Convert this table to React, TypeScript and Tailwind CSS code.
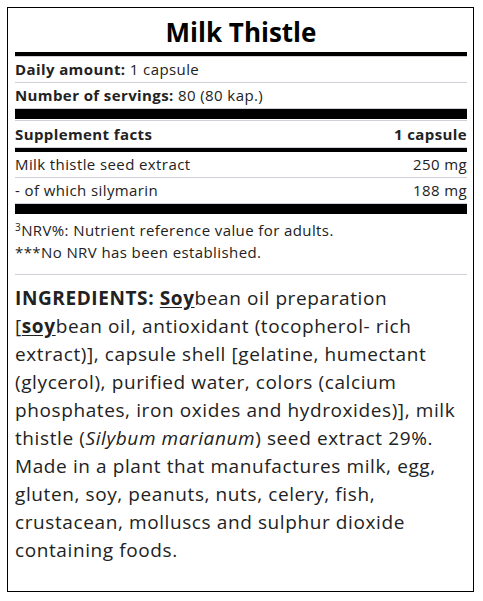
import React from "react";

const font = { fontFamily: '"Open Sans", "Liberation Sans", sans-serif' };

function Row({ left, right }: { left: React.ReactNode; right?: React.ReactNode }) {
  return (
    <div className="flex items-center justify-between h-[25px] text-[15px] leading-[25px] tracking-[0.4px] text-[#222]">
      <span>{left}</span>
      {right !== undefined && <span>{right}</span>}
    </div>
  );
}

export default function App() {
  return (
    <div className="bg-white min-h-[601px] pt-[7px] pl-[7px]" style={font}>
      <div className="w-[467px] h-[585px] border border-black pl-[7px] pr-[6px] text-[#222]">
        <div className="pt-[10px] pb-[6px] leading-[28px] text-center text-[26px] font-bold text-black">Milk Thistle</div>
        <div className="h-[4px] bg-black" />
        <div className="border-t border-[#cfcfdc]">
          <Row left={<><b>Daily amount:</b> <span className="font-normal">1 capsule</span></>} />
        </div>
        <div className="border-t border-b border-[#cfcfdc]">
          <Row left={<><b>Number of servings:</b> <span className="font-normal">80 (80 kap.)</span></>} />
        </div>
        <div className="h-[10px] bg-black" />
        <div className="mt-[1px] border-t border-b border-[#cfcfdc]">
          <div className="flex items-center justify-between h-[26px] text-[15px] tracking-[0.4px] font-bold text-[#222]">
            <span>Supplement facts</span>
            <span>1 capsule</span>
          </div>
        </div>
        <div className="h-[4px] bg-black" />
        <div className="border-b border-[#cfcfdc]">
          <Row left="Milk thistle seed extract" right="250 mg" />
        </div>
        <div className="border-b border-[#cfcfdc]">
          <Row left="- of which silymarin" right="188 mg" />
        </div>
        <div className="h-[10px] bg-black" />
        <div className="mt-[5px] text-[15px] leading-[22px] tracking-[0.4px] text-[#222]">
          <div>
            <sup className="text-[10px]">3</sup>NRV%: Nutrient reference value for adults.
          </div>
          <div>***No NRV has been established.</div>
        </div>
        <div className="mt-[11px] border-t border-[#cfcfdc]" />
        <div className="pt-[9px] text-[19px] leading-[28px] tracking-[0.6px] text-[#222]">
          <b>INGREDIENTS: </b>
          <b className="underline underline-offset-2">Soy</b>bean oil preparation<br />
          [<b className="underline underline-offset-2">soy</b>bean oil, antioxidant (tocopherol- rich<br />
          extract)], capsule shell [gelatine, humectant<br />
          (glycerol), purified water, colors (calcium<br />
          phosphates, iron oxides and hydroxides)], milk<br />
          thistle (<i>Silybum marianum</i>) seed extract 29%.<br />
          Made in a plant that manufactures milk, egg,<br />
          gluten, soy, peanuts, nuts, celery, fish,<br />
          crustacean, molluscs and sulphur dioxide<br />
          containing foods.
        </div>
      </div>
    </div>
  );
}
